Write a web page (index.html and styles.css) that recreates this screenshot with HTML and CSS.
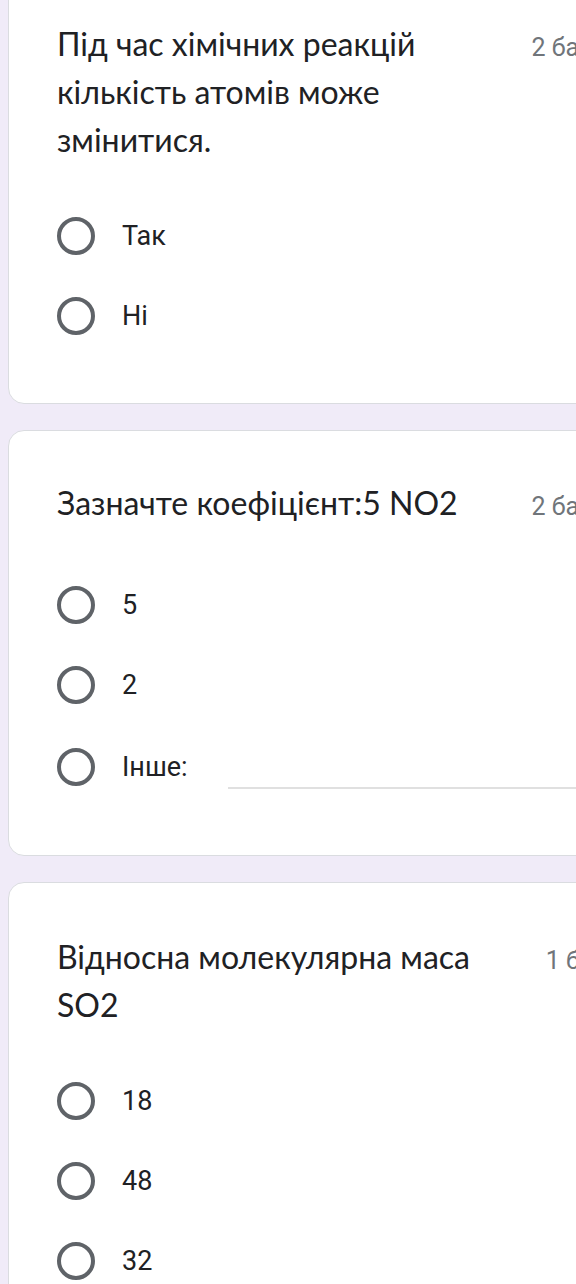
FILE: index.html
```html
<!DOCTYPE html>
<html lang="uk">
<head>
<meta charset="utf-8">
<link rel="stylesheet" href="styles.css">
</head>
<body>
<div class="page">
  <div class="card">
    <div class="head">
      <div class="title">Під час хімічних реакцій кількість атомів може змінитися.</div>
      <div class="points">2 бали</div>
    </div>
    <div class="options">
      <div class="option"><span class="radio"></span><span class="label">Так</span></div>
      <div class="option"><span class="radio"></span><span class="label">Ні</span></div>
    </div>
  </div>
  <div class="card">
    <div class="head head-spaced">
      <div class="title">Зазначте коефіцієнт:5 NO2</div>
      <div class="points">2 бали</div>
    </div>
    <div class="options">
      <div class="option"><span class="radio"></span><span class="label">5</span></div>
      <div class="option"><span class="radio"></span><span class="label">2</span></div>
      <div class="option option-other"><span class="radio"></span><span class="label">Інше:</span><span class="other-input"></span></div>
    </div>
  </div>
  <div class="card">
    <div class="head">
      <div class="title">Відносна молекулярна маса SO2</div>
      <div class="points">1 бал</div>
    </div>
    <div class="options">
      <div class="option"><span class="radio"></span><span class="label">18</span></div>
      <div class="option"><span class="radio"></span><span class="label">48</span></div>
      <div class="option"><span class="radio"></span><span class="label">32</span></div>
      <div class="option"><span class="radio"></span><span class="label">64</span></div>
    </div>
  </div>
</div>
</body>
</html>
```

FILE: styles.css
```css
html, body {
  margin: 0;
  padding: 0;
}
body {
  background: #f0ebf8;
  overflow: hidden;
  height: 1284px;
  font-family: Roboto, "Noto Sans", sans-serif;
  color: #202124;
}
.page {
  padding-left: 8px;
  margin-top: -31px;
}
.card {
  width: 551px;
  background: #fff;
  border: 1px solid #dadce0;
  border-radius: 16px;
  padding: 50px 48px 47px 48px;
  margin-bottom: 26px;
}
.head {
  display: flex;
  align-items: baseline;
  margin-bottom: 32px;
}
.head-spaced {
  margin-top: -2px;
  margin-bottom: 38px;
}
.title {
  flex: 1;
  font-family: Lato, "Open Sans", sans-serif;
  font-size: 32px;
  line-height: 48px;
  color: #202124;
}
.points {
  margin-left: 40px;
  font-size: 25px;
  color: #70757a;
  white-space: nowrap;
}
.options {
  display: flex;
  flex-direction: column;
}
.option {
  display: flex;
  align-items: center;
  height: 80px;
}
.option-other {
  height: 83px;
}
.radio {
  width: 38px;
  height: 38px;
  box-sizing: border-box;
  border: 4px solid #5f6368;
  border-radius: 50%;
  margin-right: 27px;
  flex: none;
}
.label {
  font-size: 27px;
  color: #202124;
}
.other-input {
  flex: 1;
  height: 42px;
  margin-left: 40px;
  margin-right: -60px;
  border-bottom: 2px solid #e0e0e0;
}
```
